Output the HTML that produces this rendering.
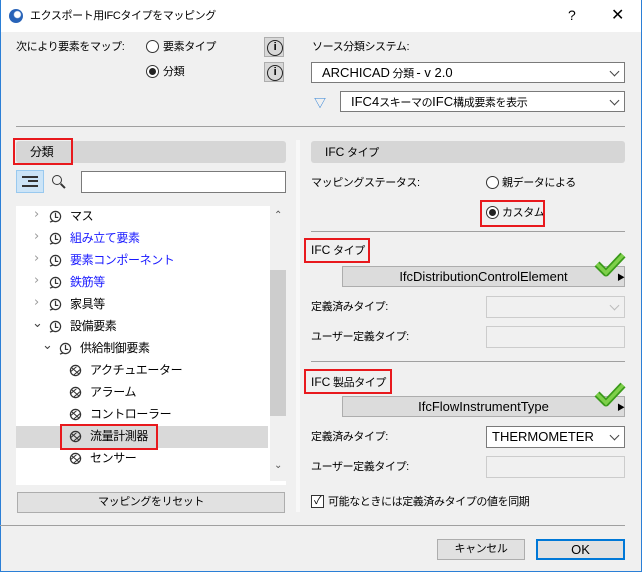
<!DOCTYPE html>
<html><head><meta charset="utf-8"><style>
*{box-sizing:border-box;margin:0;padding:0}
body{width:642px;height:572px;background:#f0f0f0;font-family:"Liberation Sans","Noto Sans CJK JP",sans-serif;font-size:11px;letter-spacing:-0.4px;color:#000;position:relative;overflow:hidden}
.a{position:absolute;white-space:nowrap}
.t{line-height:16px}
.L{font-size:13px;letter-spacing:0}
.rad{position:absolute;width:13px;height:13px;border:1px solid #333;border-radius:50%;background:#fff}
.rad.on::after{content:"";position:absolute;left:2px;top:2px;width:7px;height:7px;border-radius:50%;background:#222}
.info{position:absolute;width:20px;height:20px;background:#d8d8d8;border:1px solid #adadad}
.info::after{content:"i";position:absolute;left:2px;top:2px;width:14px;height:14px;border:1px solid #222;border-radius:50%;font-size:11px;line-height:13px;text-align:center;font-weight:bold}
.dd{position:absolute;background:#fff;border:1px solid #7a7a7a;height:21px;padding-left:10px;line-height:19px}
.dd::after{content:"";position:absolute;right:6px;top:5px;width:6px;height:6px;border-right:1px solid #444;border-bottom:1px solid #444;transform:rotate(45deg)}
.dis{background:#f0f0f0;border-color:#ccc}
.dis::after{border-color:#bbb}
.hdr{position:absolute;background:#d6d6d6;border-radius:3px;height:22px;line-height:22px}
.red{position:absolute;border:2px solid #e8191d}
.btn{position:absolute;background:#e1e1e1;border:1px solid #adadad;text-align:center;height:21px;line-height:19px}
.hl{position:absolute;height:1px;background:#a0a0a0}
.chev{position:absolute;color:#999;font-size:13px;font-family:"DejaVu Sans",sans-serif}
.ico{position:absolute;width:13px;height:13px}
.blue{color:#1a1aff}
.chk{position:absolute;width:32px;height:28px}
</style></head><body>
<svg width="0" height="0" style="position:absolute"><defs>
<symbol id="f" viewBox="0 0 14 14"><circle cx="7" cy="7" r="5.5" fill="none" stroke="#333" stroke-width="1.3"/><path d="M7 3 V8 L10 8 M4 12 L1 13" fill="none" stroke="#333" stroke-width="1.3"/></symbol>
<symbol id="g" viewBox="0 0 14 14"><circle cx="7" cy="7" r="5.5" fill="none" stroke="#333" stroke-width="1.3"/><path d="M3 4 L11 11 M2 8 L8 3 M5 12 L12 6" fill="none" stroke="#333" stroke-width="1.1"/></symbol>
</defs></svg>
<div class="a" style="left:0;top:0;width:642px;height:32px;background:#fff"></div>
<div class="a" style="left:0;top:0;width:1px;height:572px;background:#2b7fd6"></div>
<div class="a" style="left:641px;top:0;width:1px;height:572px;background:#2b7fd6"></div>
<div class="a" style="left:0;top:571px;width:642px;height:1px;background:#2b7fd6"></div>
<div class="a" style="left:9px;top:9px;width:14px;height:14px;border-radius:50%;background:radial-gradient(circle at 60% 40%,#fff 0 3px,#2863b8 4px)"></div>
<div class="a t" style="left:30px;top:8px">エクスポート用IFCタイプをマッピング</div>
<div class="a" style="left:568px;top:7px;font-size:14px">?</div>
<div class="a" style="left:611px;top:5px;font-size:16px">✕</div>

<div class="a t" style="left:16px;top:39px">次により要素をマップ:</div>
<div class="rad" style="left:146px;top:40px"></div><div class="a t" style="left:163px;top:39px">要素タイプ</div>
<div class="rad on" style="left:146px;top:65px"></div><div class="a t" style="left:163px;top:64px">分類</div>
<div class="info" style="left:264px;top:37px"></div>
<div class="info" style="left:264px;top:62px"></div>
<div class="a t" style="left:312px;top:39px">ソース分類システム:</div>
<div class="dd" style="left:311px;top:62px;width:314px"><span class="L">ARCHICAD</span> 分類 <span class="L">- v 2.0</span></div>
<div class="a" style="left:314px;top:94px;color:#2b7fd6;font-size:12px">▽</div>
<div class="dd" style="left:340px;top:91px;width:285px"><span class="L">IFC4</span>スキーマの<span class="L">IFC</span>構成要素を表示</div>
<div class="hl" style="left:16px;top:126px;width:609px"></div>

<div class="hdr" style="left:16px;top:141px;width:270px;padding-left:14px;font-size:12px">分類</div>
<div class="red" style="left:13px;top:138px;width:60px;height:27px"></div>
<div class="a" style="left:16px;top:170px;width:28px;height:23px;background:#cce4f7;border:1px solid #99c9ef"></div>
<div class="a" style="left:22px;top:176px;width:16px;height:11px;border-top:2px solid #333;border-bottom:2px solid #333"></div>
<div class="a" style="left:28px;top:180px;width:10px;height:2px;background:#333"></div>
<div class="a" style="left:52px;top:175px;width:10px;height:10px;border:1.5px solid #333;border-radius:50%"></div>
<div class="a" style="left:60px;top:185px;width:6px;height:1.5px;background:#333;transform:rotate(45deg)"></div>
<div class="a" style="left:81px;top:171px;width:205px;height:22px;background:#fff;border:1px solid #7a7a7a"></div>

<div class="a" style="left:16px;top:206px;width:270px;height:275px;background:#fff;overflow:hidden">
<div class="a" style="left:254px;top:0;width:16px;height:275px;background:#f0f0f0"></div>
<div class="a" style="left:254px;top:64px;width:16px;height:146px;background:#cdcdcd"></div>
<div class="a" style="left:258px;top:4px;font-size:10px;color:#555">⌃</div>
<div class="a" style="left:258px;top:254px;font-size:10px;color:#555">⌄</div>
</div>
<div class="a" style="left:16px;top:426px;width:252px;height:22px;background:#d9d9d9"></div>

<div style="position:absolute;left:0;top:0;font-size:12px">
<div class="chev" style="left:34px;top:207px">›</div><svg class="ico" style="left:49px;top:210px"><use href="#f"/></svg><div class="a t" style="left:70px;top:208px">マス</div>
<div class="chev" style="left:34px;top:229px">›</div><svg class="ico" style="left:49px;top:232px"><use href="#f"/></svg><div class="a t blue" style="left:70px;top:230px">組み立て要素</div>
<div class="chev" style="left:34px;top:251px">›</div><svg class="ico" style="left:49px;top:254px"><use href="#f"/></svg><div class="a t blue" style="left:70px;top:252px">要素コンポーネント</div>
<div class="chev" style="left:34px;top:273px">›</div><svg class="ico" style="left:49px;top:276px"><use href="#f"/></svg><div class="a t blue" style="left:70px;top:274px">鉄筋等</div>
<div class="chev" style="left:34px;top:295px">›</div><svg class="ico" style="left:49px;top:298px"><use href="#f"/></svg><div class="a t" style="left:70px;top:296px">家具等</div>
<div class="chev" style="left:32px;top:316px;color:#444">⌄</div><svg class="ico" style="left:49px;top:320px"><use href="#f"/></svg><div class="a t" style="left:70px;top:318px">設備要素</div>
<div class="chev" style="left:42px;top:338px;color:#444">⌄</div><svg class="ico" style="left:59px;top:342px"><use href="#f"/></svg><div class="a t" style="left:80px;top:340px">供給制御要素</div>
<svg class="ico" style="left:69px;top:364px"><use href="#g"/></svg><div class="a t" style="left:90px;top:362px">アクチュエーター</div>
<svg class="ico" style="left:69px;top:386px"><use href="#g"/></svg><div class="a t" style="left:90px;top:384px">アラーム</div>
<svg class="ico" style="left:69px;top:408px"><use href="#g"/></svg><div class="a t" style="left:90px;top:406px">コントローラー</div>
<svg class="ico" style="left:69px;top:430px"><use href="#g"/></svg><div class="a t" style="left:90px;top:428px">流量計測器</div>
<div class="red" style="left:60px;top:424px;width:98px;height:26px"></div>
<svg class="ico" style="left:69px;top:452px"><use href="#g"/></svg><div class="a t" style="left:90px;top:450px">センサー</div>
</div>
<div class="a" style="left:16px;top:481px;width:270px;height:4px;background:#fff"></div>
<div class="btn" style="left:17px;top:492px;width:268px">マッピングをリセット</div>

<div class="a" style="left:296px;top:140px;width:4px;height:372px;background:#f8f8f8"></div>

<div class="hdr" style="left:311px;top:141px;width:314px;padding-left:14px"><span class="L" style="font-size:12px">IFC</span> タイプ</div>
<div class="a t" style="left:311px;top:175px">マッピングステータス:</div>
<div class="rad" style="left:486px;top:176px"></div><div class="a t" style="left:502px;top:175px">親データによる</div>
<div class="rad on" style="left:486px;top:206px"></div><div class="a t" style="left:502px;top:205px">カスタム</div>
<div class="red" style="left:480px;top:200px;width:65px;height:27px"></div>
<div class="hl" style="left:311px;top:231px;width:314px"></div>
<div class="a t" style="left:311px;top:242px"><span class="L" style="font-size:12px">IFC</span> タイプ</div>
<div class="red" style="left:304px;top:238px;width:66px;height:25px"></div>
<div class="btn L" style="left:342px;top:266px;width:283px;background:#dcdcdc">IfcDistributionControlElement</div>
<div class="a" style="left:617px;top:272px;font-size:8px">▶</div>
<svg class="chk" style="left:594px;top:250px" viewBox="0 0 32 28"><path d="M3 14 L12 23 L29 5" fill="none" stroke="#3a9a1a" stroke-width="7" stroke-linejoin="round"/><path d="M3 14 L12 23 L29 5" fill="none" stroke="#7ed04a" stroke-width="3.5"/></svg>
<div class="a t" style="left:311px;top:299px">定義済みタイプ:</div>
<div class="dd dis" style="left:486px;top:296px;width:139px;height:22px"></div>
<div class="a t" style="left:311px;top:329px">ユーザー定義タイプ:</div>
<div class="a" style="left:486px;top:326px;width:139px;height:22px;border:1px solid #ccc"></div>
<div class="hl" style="left:311px;top:361px;width:314px"></div>
<div class="a t" style="left:311px;top:374px"><span class="L" style="font-size:12px">IFC</span> 製品タイプ</div>
<div class="red" style="left:304px;top:369px;width:88px;height:25px"></div>
<div class="btn L" style="left:342px;top:396px;width:283px;background:#dcdcdc">IfcFlowInstrumentType</div>
<div class="a" style="left:617px;top:402px;font-size:8px">▶</div>
<svg class="chk" style="left:594px;top:380px" viewBox="0 0 32 28"><path d="M3 14 L12 23 L29 5" fill="none" stroke="#3a9a1a" stroke-width="7" stroke-linejoin="round"/><path d="M3 14 L12 23 L29 5" fill="none" stroke="#7ed04a" stroke-width="3.5"/></svg>
<div class="a t" style="left:311px;top:429px">定義済みタイプ:</div>
<div class="dd L" style="left:486px;top:426px;width:139px;height:22px;line-height:20px;padding-left:5px">THERMOMETER</div>
<div class="a t" style="left:311px;top:459px">ユーザー定義タイプ:</div>
<div class="a" style="left:486px;top:456px;width:139px;height:22px;border:1px solid #ccc"></div>
<div class="a" style="left:311px;top:495px;width:13px;height:13px;border:1px solid #333;background:#fff;font-size:11px;line-height:11px;text-align:center">✓</div>
<div class="a t" style="left:328px;top:494px">可能なときには定義済みタイプの値を同期</div>
<div class="hl" style="left:0;top:525px;width:625px"></div>
<div class="btn" style="left:437px;top:539px;width:88px;height:21px">キャンセル</div>
<div class="btn L" style="left:536px;top:539px;width:89px;height:21px;border:2px solid #0078d7;line-height:17px">OK</div>
</body></html>
